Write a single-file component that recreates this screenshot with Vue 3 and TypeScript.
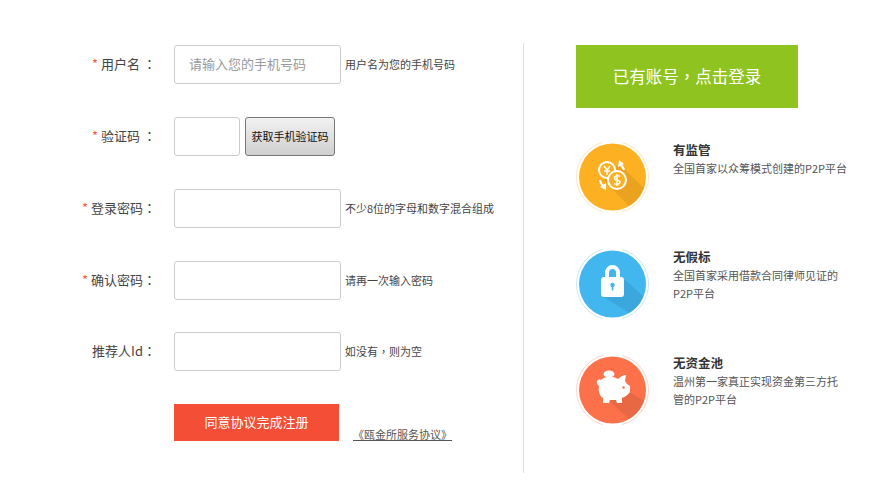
<template>
  <div class="page">
    <div class="form-col">
      <div v-for="row in rows" :key="row.label" class="form-row" :class="row.cls">
        <label class="row-label">
          <span v-if="row.required" class="star">*</span>
          {{ row.label }}<span class="colon">：</span>
        </label>
        <template v-if="row.code">
          <input class="text-input code-input" type="text" />
          <button class="code-btn" type="button">获取手机验证码</button>
        </template>
        <template v-else>
          <input class="text-input" type="text" :placeholder="row.placeholder" />
          <span class="hint">{{ row.hint }}</span>
        </template>
      </div>
      <div class="submit-row">
        <button class="submit-btn" type="button">同意协议完成注册</button>
        <a class="agreement" href="#">《瓯金所服务协议》</a>
      </div>
    </div>

    <div class="side-col">
      <button class="login-btn" type="button">已有账号，点击登录</button>

      <div v-for="f in features" :key="f.title" class="feature" :class="f.cls">
        <svg class="feature-icon" width="78" height="78" viewBox="0 0 78 78">
          <circle cx="39.5" cy="39" r="36" fill="none" :stroke="f.color" stroke-opacity="0.3" stroke-width="1" stroke-dasharray="93 20" stroke-dashoffset="-66.5" />
          <circle cx="39.5" cy="39" r="33.5" :fill="f.color" />
          <template v-if="f.icon === 'coins'">
            <path d="M46 26 L71 50 A33.5 33.5 0 0 1 56 68 L30 42 Z" fill="#000" fill-opacity="0.07" />
            <circle cx="34" cy="32" r="8" fill="none" stroke="#fff" stroke-width="2" />
            <circle cx="44" cy="42" r="9" :fill="f.color" stroke="#fff" stroke-width="2" />
            <path d="M31 28 L34 32 L37 28 M34 32 V37 M31 33 H37" fill="none" stroke="#fff" stroke-width="1.4" />
            <path d="M47 38.5 C45 37 41 38 41.5 40.5 C42 43 47 41.5 47 44 C47 46.5 43 47 41 45.5 M44 36 V48" fill="none" stroke="#fff" stroke-width="1.4" />
            <path d="M46 26 A9 9 0 0 1 51 32" fill="none" stroke="#fff" stroke-width="2" />
            <path d="M46 22 L51 26 L45 29 Z" fill="#fff" />
            <path d="M27 42 A9 9 0 0 0 32 49" fill="none" stroke="#fff" stroke-width="2" />
            <path d="M33 45 L33 52 L27 49 Z" fill="#fff" />
          </template>
          <template v-else-if="f.icon === 'lock'">
            <path d="M50 33 L71 52 A33.5 33.5 0 0 1 56 68 L29 51 Z" fill="#000" fill-opacity="0.08" />
            <path d="M34 33 V27.5 A5.5 5.5 0 0 1 45 27.5 V33" fill="none" stroke="#fff" stroke-width="4" />
            <rect x="28" y="32" width="23" height="20" rx="3" fill="#fff" />
            <circle cx="39.5" cy="40" r="2.2" :fill="f.color" />
            <rect x="38.7" y="41" width="1.6" height="4.5" :fill="f.color" />
          </template>
          <template v-else>
            <path d="M54 40 L72 50 A33.5 33.5 0 0 1 56 68 L36 50 Z" fill="#000" fill-opacity="0.08" />
            <ellipse cx="36" cy="23" rx="5.5" ry="3.6" fill="#fff" />
            <path d="M28 29 C24 27 22 32 26 35 C25 41 27 45 30 47 L30 52 H36 L37 49 H43 L44 52 H49 L49 47 C52 46 55 44 57 41 L57 35 C55 34 53 32 52 30 L53 24 C50 24 47 26 45 28 C40 25 32 25 28 29 Z" fill="#fff" />
            <circle cx="50.5" cy="36.5" r="1.2" :fill="f.color" />
          </template>
        </svg>
        <div class="feature-text">
          <h4 class="feature-title">{{ f.title }}</h4>
          <p class="feature-desc">{{ f.desc }}</p>
        </div>
      </div>
    </div>
  </div>
</template>

<script setup lang="ts">
interface Row {
  label: string
  required: boolean
  placeholder?: string
  hint?: string
  code?: boolean
  cls?: string
}

const rows: Row[] = [
  { label: '用户名 ', required: true, placeholder: '请输入您的手机号码', hint: '用户名为您的手机号码' },
  { label: '验证码 ', required: true, code: true },
  { label: '登录密码', required: true, hint: '不少8位的字母和数字混合组成' },
  { label: '确认密码', required: true, hint: '请再一次输入密码' },
  { label: '推荐人Id', required: false, hint: '如没有，则为空', cls: 'row-last' }
]

const features = [
  { title: '有监管', desc: '全国首家以众筹模式创建的P2P平台', color: '#fdb022', icon: 'coins', cls: 'f-first' },
  { title: '无假标', desc: '全国首家采用借款合同律师见证的P2P平台', color: '#41b6ef', icon: 'lock', cls: 'f-second' },
  { title: '无资金池', desc: '温州第一家真正实现资金第三方托管的P2P平台', color: '#fc7149', icon: 'pig', cls: 'f-third' }
]
</script>

<style scoped>
.page {
  display: flex;
  width: 879px;
  height: 500px;
  box-sizing: border-box;
  padding-top: 43px;
  background: #fff;
  font-family: "Noto Sans CJK SC", "Liberation Sans", sans-serif;
  font-size: 12px;
  color: #444;
  overflow: hidden;
}

.form-col {
  width: 524px;
  height: 430px;
  padding-top: 2px;
  box-sizing: border-box;
  border-right: 1px solid #ddd;
  flex-shrink: 0;
}

.form-row {
  display: flex;
  align-items: center;
  height: 39px;
  margin-bottom: 33px;
}

.row-last {
  margin-top: -1px;
  margin-bottom: 33px;
}

.row-label {
  width: 156px;
  margin-right: 18px;
  padding-bottom: 2px;
  text-align: right;
  font-size: 13px;
  color: #444;
  white-space: nowrap;
}

.colon {
  font-family: "Noto Sans CJK TC", sans-serif;
}

.star {
  color: #f4603c;
}

.text-input {
  width: 167px;
  height: 39px;
  box-sizing: border-box;
  padding: 0 14px 2px;
  border: 1px solid #ccc;
  border-radius: 3px;
  font-family: inherit;
  font-size: 13px;
  outline: none;
}

.text-input::placeholder {
  color: #999;
}

.code-input {
  width: 66px;
}

.code-btn {
  width: 90px;
  height: 39px;
  margin-left: 5px;
  padding: 0 0 2px;
  border: 1px solid #777;
  border-radius: 3px;
  background: linear-gradient(#f2f2f2, #cfcfcf);
  font-family: inherit;
  font-size: 11px;
  color: #111;
}

.hint {
  margin-left: 4px;
  padding-bottom: 2px;
  font-size: 11px;
  color: #444;
  white-space: nowrap;
}

.row-last .hint {
  font-family: "Noto Sans CJK TC", sans-serif;
}

.submit-row {
  display: flex;
  align-items: flex-end;
  padding-left: 174px;
}

.submit-btn {
  width: 165px;
  height: 37px;
  border: none;
  background: #f54e36;
  color: #fff;
  font-family: inherit;
  font-size: 13px;
  padding: 0 0 2px;
}

.agreement {
  margin-left: 14px;
  font-size: 11px;
  line-height: 14px;
  color: #555;
}

.side-col {
  flex: 1;
  padding: 2px 0 0 52px;
}

.login-btn {
  display: block;
  width: 222px;
  height: 63px;
  border: none;
  background: #8fc31f;
  color: #fff;
  font-family: "Noto Sans CJK TC", sans-serif;
  font-size: 16.5px;
  padding: 0 0 2px;
}

.feature {
  display: flex;
  align-items: flex-start;
  width: 280px;
  margin-left: -3px;
}

.f-first {
  margin-top: 30px;
}

.f-second {
  margin-top: 29px;
}

.f-third {
  margin-top: 28px;
}

.feature-icon {
  flex-shrink: 0;
  margin-right: 22px;
}

.feature-text {
  width: 175px;
  padding-top: 3px;
}

.feature-title {
  margin: 0;
  font-size: 12.5px;
  line-height: 18px;
  font-weight: 700;
  color: #333;
}

.feature-desc {
  margin: 0;
  font-size: 11px;
  line-height: 18px;
  color: #555;
}
</style>
